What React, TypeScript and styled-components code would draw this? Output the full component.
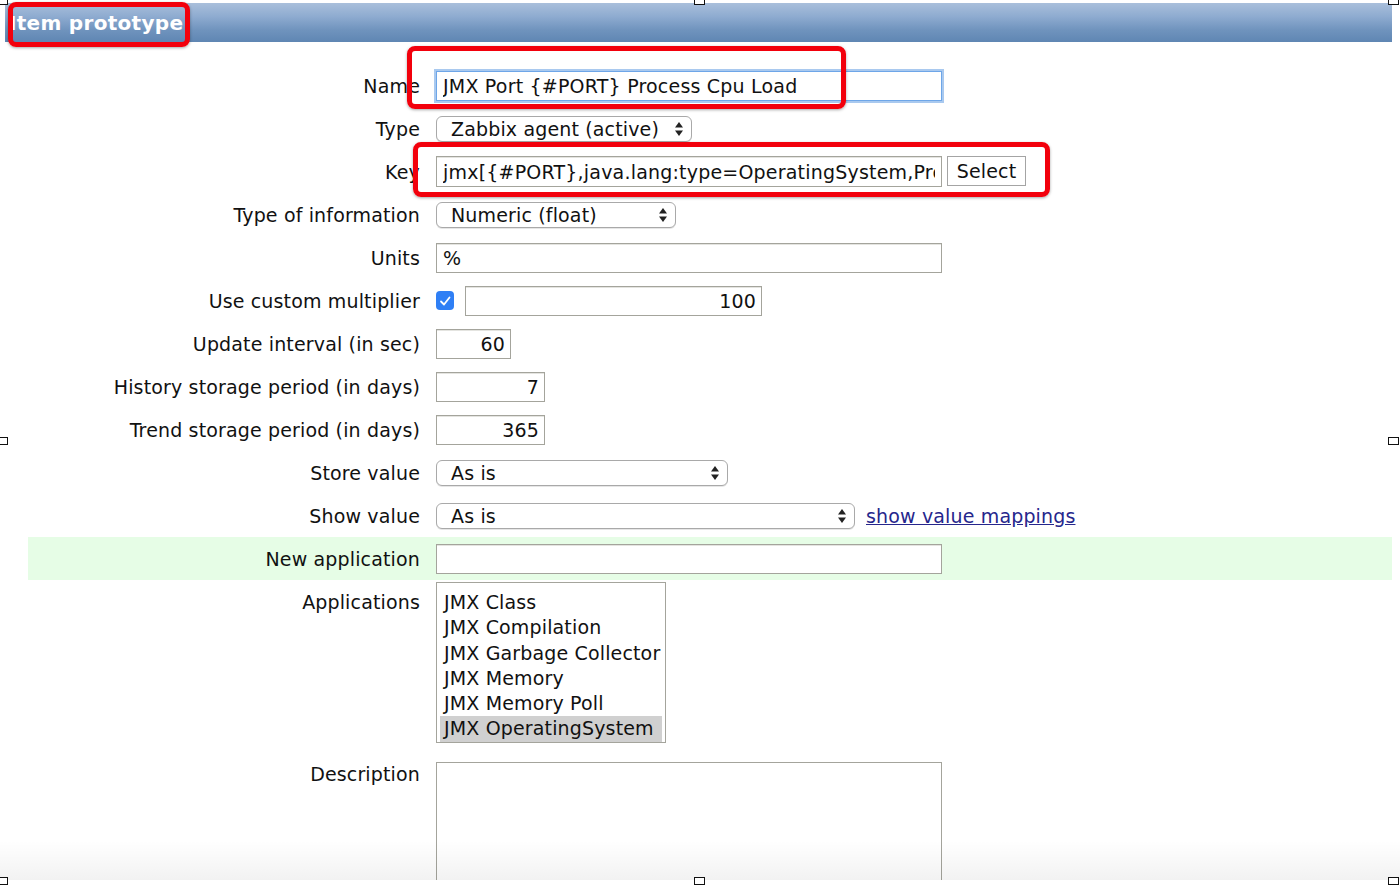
import React from 'react';
import styled, { createGlobalStyle } from 'styled-components';

const APPLICATIONS = [
  'JMX Class',
  'JMX Compilation',
  'JMX Garbage Collector',
  'JMX Memory',
  'JMX Memory Poll',
  'JMX OperatingSystem',
];

const HANDLES = [
  { x: -3, y: -3 },
  { x: 694, y: -3 },
  { x: 1388, y: -3 },
  { x: -3, y: 437 },
  { x: 1388, y: 437 },
  { x: -3, y: 877 },
  { x: 694, y: 877 },
  { x: 1388, y: 877 },
];

const Arrows = () => (
  <svg width="10" height="16" viewBox="0 0 10 16">
    <path d="M5 1 L9 6.5 L1 6.5 Z" fill="#222" />
    <path d="M5 15 L9 9.5 L1 9.5 Z" fill="#222" />
  </svg>
);

const Check = () => (
  <svg width="12" height="12" viewBox="0 0 12 12">
    <path d="M2 6.5 L5 9.5 L10.5 2.5" stroke="#fff" strokeWidth="1.8" fill="none" strokeLinecap="round" strokeLinejoin="round" />
  </svg>
);

const App = () => {
  return (
    <Page>
      <GlobalStyle />
      <Screen>
        <Header>Item prototype</Header>
        <Form>
          <Row>
            <Label>Name</Label>
            <Field>
              <TextInput $w={506} $focus defaultValue="JMX Port {#PORT} Process Cpu Load" />
            </Field>
          </Row>
          <Row>
            <Label>Type</Label>
            <Field>
              <FakeSelect $w={256}>
                <span>Zabbix agent (active)</span>
                <Arrows />
              </FakeSelect>
            </Field>
          </Row>
          <Row>
            <Label>Key</Label>
            <Field>
              <TextInput $w={506} $h={31} defaultValue="jmx[{#PORT},java.lang:type=OperatingSystem,ProcessCpuLoad]" />
              <Button>Select</Button>
            </Field>
          </Row>
          <Row>
            <Label>Type of information</Label>
            <Field>
              <FakeSelect $w={240}>
                <span>Numeric (float)</span>
                <Arrows />
              </FakeSelect>
            </Field>
          </Row>
          <Row>
            <Label>Units</Label>
            <Field>
              <TextInput $w={506} defaultValue="%" />
            </Field>
          </Row>
          <Row>
            <Label>Use custom multiplier</Label>
            <Field>
              <CheckBox>
                <Check />
              </CheckBox>
              <TextInput $w={297} $right defaultValue="100" />
            </Field>
          </Row>
          <Row>
            <Label>Update interval (in sec)</Label>
            <Field>
              <TextInput $w={75} $right defaultValue="60" />
            </Field>
          </Row>
          <Row>
            <Label>History storage period (in days)</Label>
            <Field>
              <TextInput $w={109} $right defaultValue="7" />
            </Field>
          </Row>
          <Row>
            <Label>Trend storage period (in days)</Label>
            <Field>
              <TextInput $w={109} $right defaultValue="365" />
            </Field>
          </Row>
          <Row>
            <Label>Store value</Label>
            <Field>
              <FakeSelect $w={292}>
                <span>As is</span>
                <Arrows />
              </FakeSelect>
            </Field>
          </Row>
          <Row>
            <Label>Show value</Label>
            <Field>
              <FakeSelect $w={419}>
                <span>As is</span>
                <Arrows />
              </FakeSelect>
              <MapLink href="#">show value mappings</MapLink>
            </Field>
          </Row>
          <Row $green>
            <Label>New application</Label>
            <Field>
              <TextInput $w={506} defaultValue="" />
            </Field>
          </Row>
          <TopRow>
            <Label $top={9}>Applications</Label>
            <Field>
              <ListBox>
                {APPLICATIONS.map((app, index) => (
                  <ListItem key={app} $selected={index === APPLICATIONS.length - 1}>
                    {app}
                  </ListItem>
                ))}
              </ListBox>
            </Field>
          </TopRow>
          <TopRow $gap={19}>
            <Label $top={1}>Description</Label>
            <Field>
              <TextArea />
            </Field>
          </TopRow>
        </Form>
        <BottomFade />
      </Screen>

      <RedMark style={{ left: 8, top: 2, width: 182, height: 45 }} />
      <RedMark style={{ left: 407, top: 46, width: 439, height: 63 }} />
      <RedMark style={{ left: 413, top: 142, width: 637, height: 55 }} />

      {HANDLES.map((h, index) => (
        <Handle key={index} style={{ left: h.x, top: h.y }} />
      ))}
    </Page>
  );
};

const GlobalStyle = createGlobalStyle`
  body {
    margin: 0;
    background: #ffffff;
    font-family: "DejaVu Sans", Verdana, sans-serif;
    color: #111;
  }
`;

const Page = styled.div`
  position: relative;
  width: 1400px;
  height: 885px;
  overflow: hidden;
  background: #fff;
`;

const Screen = styled.div`
  position: relative;
  height: 880px;
  overflow: hidden;
  padding-top: 3px;
  box-sizing: border-box;
`;

const Header = styled.div`
  margin: 0 8px 0 5px;
  height: 39px;
  display: flex;
  align-items: center;
  padding-left: 4px;
  background: linear-gradient(to bottom, #a9bfdb 0%, #8eabd0 35%, #6f93bd 70%, #5f86b3 100%);
  color: #fff;
  font-weight: bold;
  font-size: 20px;
  letter-spacing: 0.3px;
`;

const Form = styled.div`
  padding-top: 22px;
  margin: 0 8px 0 28px;
  letter-spacing: 0.15px;
`;

const Row = styled.div<{ $green?: boolean }>`
  display: flex;
  align-items: center;
  height: 43px;
  background: ${({ $green }) => ($green ? '#e6fde6' : 'transparent')};
`;

const TopRow = styled.div<{ $gap?: number }>`
  display: flex;
  align-items: flex-start;
  margin-top: ${({ $gap }) => $gap || 2}px;
`;

const Label = styled.div<{ $top?: number }>`
  width: 392px;
  text-align: right;
  font-size: 19px;
  line-height: 22px;
  padding-top: ${({ $top }) => $top || 0}px;
  flex-shrink: 0;
`;

const Field = styled.div`
  display: flex;
  align-items: center;
  margin-left: 16px;
`;

const TextInput = styled.input<{ $w: number; $h?: number; $right?: boolean; $focus?: boolean }>`
  width: ${({ $w }) => $w}px;
  height: ${({ $h }) => $h || 30}px;
  box-sizing: border-box;
  border: 1px solid ${({ $focus }) => ($focus ? '#6ea6e8' : '#a4a49c')};
  box-shadow: ${({ $focus }) => ($focus ? '0 0 0 2px #a9c9ef' : 'inset 0 1px 0 #e4e4e0')};
  font-family: "DejaVu Sans", Verdana, sans-serif;
  font-size: 19px;
  letter-spacing: 0.2px;
  color: #111;
  padding: 0 ${({ $right }) => ($right ? 5 : 6)}px;
  text-align: ${({ $right }) => ($right ? 'right' : 'left')};
  background: #fff;
  outline: none;
  margin: 0;
`;

const FakeSelect = styled.div<{ $w: number }>`
  width: ${({ $w }) => $w}px;
  height: 26px;
  box-sizing: border-box;
  border: 1px solid #a9a9a9;
  border-radius: 6px;
  display: flex;
  align-items: center;
  justify-content: space-between;
  padding: 0 7px 0 14px;
  font-size: 19px;
  background: #fff;
  box-shadow: 0 1px 0 #e6e6e6;
`;

const Button = styled.div`
  margin-left: 5px;
  width: 79px;
  height: 30px;
  box-sizing: border-box;
  border: 1px solid #a4a4a4;
  background: #fff;
  display: flex;
  align-items: center;
  justify-content: center;
  font-size: 19px;
  margin-top: -2px;
`;

const CheckBox = styled.div`
  width: 18px;
  height: 19px;
  border-radius: 4px;
  background: #2f7ff5;
  display: flex;
  align-items: center;
  justify-content: center;
  margin-right: 11px;
`;

const MapLink = styled.a`
  margin-left: 11px;
  font-size: 19px;
  color: #26268c;
  text-decoration: underline;
`;

const ListBox = styled.div`
  width: 230px;
  height: 161px;
  box-sizing: border-box;
  border: 1px solid #a4a49c;
  padding: 7px 3px 0 3px;
  background: #fff;
`;

const ListItem = styled.div<{ $selected?: boolean }>`
  font-size: 19px;
  line-height: 25.3px;
  padding-left: 4px;
  background: ${({ $selected }) => ($selected ? '#d0d0d0' : 'transparent')};
`;

const TextArea = styled.div`
  width: 506px;
  height: 160px;
  box-sizing: border-box;
  border: 1px solid #a4a49c;
  background: #fff;
`;

const BottomFade = styled.div`
  position: absolute;
  left: 0;
  right: 0;
  bottom: 0;
  height: 40px;
  background: linear-gradient(to bottom, rgba(0, 0, 0, 0), rgba(0, 0, 0, 0.05));
  pointer-events: none;
`;

const RedMark = styled.div`
  position: absolute;
  box-sizing: border-box;
  border: 5px solid #f2000c;
  border-radius: 8px;
  box-shadow: 0 1px 3px rgba(0, 0, 0, 0.35);
  pointer-events: none;
`;

const Handle = styled.div`
  position: absolute;
  width: 11px;
  height: 8px;
  box-sizing: border-box;
  border: 1px solid #111;
  background: #fff;
`;

export default App;
